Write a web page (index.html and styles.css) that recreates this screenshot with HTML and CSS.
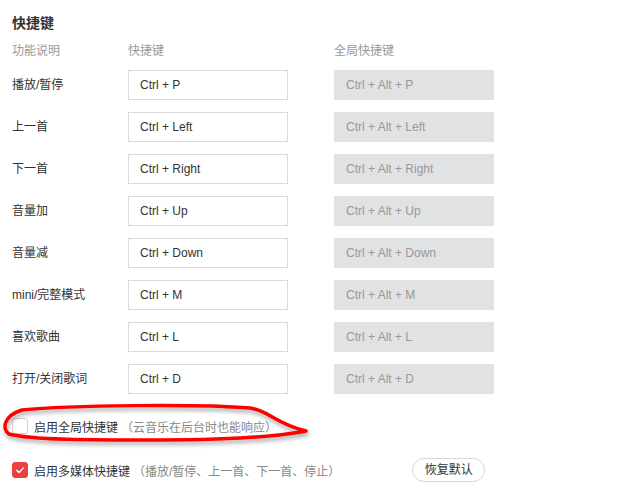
FILE: index.html
```html
<!DOCTYPE html>
<html lang="zh-CN">
<head>
<meta charset="utf-8">
<title>快捷键</title>
<link rel="stylesheet" href="styles.css">
</head>
<body>
<div class="page">
  <h2 class="title">快捷键</h2>
  <div class="grid head">
    <div>功能说明</div>
    <div>快捷键</div>
    <div>全局快捷键</div>
  </div>
  <div class="grid rows">
    <div class="label">播放/暂停</div><div class="key">Ctrl + P</div><div class="key global">Ctrl + Alt + P</div>
    <div class="label">上一首</div><div class="key">Ctrl + Left</div><div class="key global">Ctrl + Alt + Left</div>
    <div class="label">下一首</div><div class="key">Ctrl + Right</div><div class="key global">Ctrl + Alt + Right</div>
    <div class="label">音量加</div><div class="key">Ctrl + Up</div><div class="key global">Ctrl + Alt + Up</div>
    <div class="label">音量减</div><div class="key">Ctrl + Down</div><div class="key global">Ctrl + Alt + Down</div>
    <div class="label">mini/完整模式</div><div class="key">Ctrl + M</div><div class="key global">Ctrl + Alt + M</div>
    <div class="label">喜欢歌曲</div><div class="key">Ctrl + L</div><div class="key global">Ctrl + Alt + L</div>
    <div class="label">打开/关闭歌词</div><div class="key">Ctrl + D</div><div class="key global">Ctrl + Alt + D</div>
  </div>
  <div class="check-row first">
    <span class="box"></span>
    <span class="check-text">启用全局快捷键</span>
    <span class="note">（云音乐在后台时也能响应）</span>
  </div>
  <div class="check-row second">
    <span class="box checked">
      <svg width="16" height="16" viewBox="0 0 16 16"><path d="M4.2 8.2 L7 10.8 L11.8 5.6" fill="none" stroke="#fff" stroke-width="1.5" stroke-linecap="round" stroke-linejoin="round"/></svg>
    </span>
    <span class="check-text">启用多媒体快捷键</span>
    <span class="note">（播放/暂停、上一首、下一首、停止）</span>
    <button class="reset">恢复默认</button>
  </div>
  <svg class="annotation" width="636" height="503" viewBox="0 0 636 503">
    <defs>
      <filter id="sh" x="-10%" y="-50%" width="120%" height="200%">
        <feDropShadow dx="1" dy="3" stdDeviation="2" flood-color="#000" flood-opacity="0.35"/>
      </filter>
    </defs>
    <path d="M22 410 C70 405 200 404 250 408 C268 410 276 424 306 431 C280 436 240 440 160 440 C90 440 30 440 9 434 C2 429 3 416 22 410 Z" fill="none" stroke="#ff0000" stroke-width="3.5" stroke-linejoin="round" filter="url(#sh)"/>
  </svg>
</div>
</body>
</html>
```
FILE: styles.css
```css
html, body {
  margin: 0;
  padding: 0;
  background: #fff;
}
body {
  font-family: "Liberation Sans", "Noto Sans CJK SC", sans-serif;
  font-size: 12px;
  color: #333;
}
.page {
  position: relative;
  width: 636px;
  height: 503px;
  padding: 13px 0 0 12px;
  box-sizing: border-box;
  overflow: hidden;
}
.title {
  margin: 0;
  font-size: 14px;
  font-weight: bold;
  line-height: 20px;
  color: #333;
}
.grid {
  display: grid;
  grid-template-columns: 116px 206px 160px;
}
.head {
  margin-top: 8px;
  line-height: 20px;
  color: #999;
}
.rows {
  margin-top: 9px;
  row-gap: 12px;
}
.label {
  height: 30px;
  line-height: 30px;
  color: #333;
}
.key {
  width: 160px;
  height: 30px;
  box-sizing: border-box;
  border: 1px solid #dcdcdc;
  padding-left: 11px;
  line-height: 28px;
  color: #333;
  background: #fff;
}
.key.global {
  background: #e1e2e3;
  border-color: #e1e2e3;
  color: #999;
}
.check-row {
  display: flex;
  align-items: center;
  height: 24px;
}
.check-row.first {
  margin-top: 20px;
}
.check-row.second {
  margin-top: 20px;
}
.box {
  width: 16px;
  height: 16px;
  box-sizing: border-box;
  border: 1px solid #cfcfcf;
  border-radius: 3px;
  background: #fff;
  display: flex;
  align-items: center;
  justify-content: center;
  margin-right: 6px;
}
.box.checked {
  background: #ec4141;
  border-color: #ec4141;
}
.box svg {
  display: block;
}
.check-text {
  color: #333;
}
.note {
  color: #888;
  margin-left: 3px;
}
.reset {
  margin-left: 72px;
  width: 73px;
  height: 24px;
  border: 1px solid #d6d6d6;
  border-radius: 12px;
  background: #fff;
  font-family: inherit;
  font-size: 12px;
  color: #333;
  padding: 0;
  line-height: 22px;
}
.annotation {
  position: absolute;
  top: 0;
  left: 0;
  pointer-events: none;
}
```
